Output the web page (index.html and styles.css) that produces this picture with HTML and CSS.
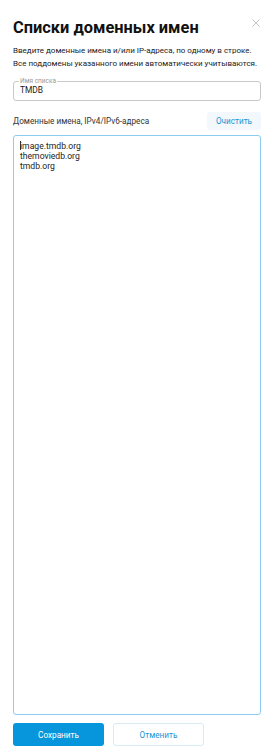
FILE: index.html
```html
<!DOCTYPE html>
<html lang="ru">
<head>
<meta charset="utf-8">
<link rel="stylesheet" href="styles.css">
</head>
<body>
<div class="dialog">
  <div class="header">
    <h1 class="title">Списки доменных имен</h1>
    <button class="close" aria-label="Закрыть">
      <svg width="8" height="8" viewBox="0 0 8 8"><path d="M0.5 0.5L7.5 7.5M7.5 0.5L0.5 7.5" stroke="#c4c4c4" stroke-width="1" fill="none"/></svg>
    </button>
  </div>
  <p class="desc">Введите доменные имена и/или IP-адреса, по одному в строке.<br>Все поддомены указанного имени автоматически учитываются.</p>
  <fieldset class="field">
    <legend class="legend">Имя списка</legend>
    <div class="field-value">TMDB</div>
  </fieldset>
  <div class="label-row">
    <span class="label">Доменные имена, IPv4/IPv6-адреса</span>
    <button class="clear">Очистить</button>
  </div>
  <div class="area"><span class="caret"></span>image.tmdb.org<br>themoviedb.org<br>tmdb.org</div>
  <div class="actions">
    <button class="btn primary">Сохранить</button>
    <button class="btn secondary">Отменить</button>
  </div>
</div>
</body>
</html>
```
FILE: styles.css
```css
* { box-sizing: border-box; }
html, body { margin: 0; padding: 0; background: #fff; }
body { font-family: Roboto, "Noto Sans", sans-serif; color: #222; }
.dialog {
  width: 276px;
  height: 750px;
  padding: 0 15px 0 13px;
  display: flex;
  flex-direction: column;
}
.header {
  display: flex;
  justify-content: space-between;
  align-items: flex-start;
  padding-top: 17px;
}
.title {
  margin: 0;
  font-size: 16.4px;
  font-weight: 700;
  line-height: 22px;
  color: #111;
}
.close {
  border: none;
  background: none;
  padding: 0;
  margin: 1px 0 0 0;
  width: 10px;
  height: 10px;
  display: flex;
  align-items: center;
  justify-content: center;
}
.desc {
  margin: 5px 0 0;
  font-size: 8px;
  line-height: 13px;
  color: #222;
  white-space: nowrap;
}
.field {
  margin: 8px 0 0;
  padding: 0 6px 4px;
  border: 1px solid #c9c9c9;
  border-radius: 3px;
  height: 23px;
  min-width: 0;
}
.legend {
  font-size: 6.5px;
  color: #9a9a9a;
  padding: 0 1px;
  margin-left: -1px;
  line-height: 6px;
}
.field-value {
  font-size: 8.4px;
  line-height: 12px;
  color: #222;
}
.label-row {
  display: flex;
  justify-content: space-between;
  align-items: center;
  margin-top: 11px;
}
.label {
  font-size: 8.2px;
  color: #333;
}
.clear {
  border: none;
  background: #f2f8fc;
  color: #1b95d3;
  font-family: inherit;
  font-size: 8.2px;
  width: 54px;
  height: 18px;
  border-radius: 3px;
  padding: 0;
}
.area {
  margin-top: 5px;
  flex: 1 1 auto;
  border: 1px solid #8ccdef;
  border-radius: 3px;
  padding: 5px 6px;
  font-size: 8.6px;
  line-height: 10px;
  color: #222;
}
.caret {
  display: inline-block;
  width: 1px;
  height: 9px;
  background: #333;
  vertical-align: -1px;
  margin-right: -1px;
}
.actions {
  display: flex;
  gap: 9px;
  padding: 8px 0 4px;
}
.btn {
  width: 91px;
  height: 23px;
  border-radius: 3px;
  font-family: inherit;
  font-size: 8.2px;
  padding: 0;
}
.primary {
  background: #0795db;
  color: #fff;
  border: none;
}
.secondary {
  background: #fff;
  color: #1b95d3;
  border: 1px solid #d9ebf4;
}
```
